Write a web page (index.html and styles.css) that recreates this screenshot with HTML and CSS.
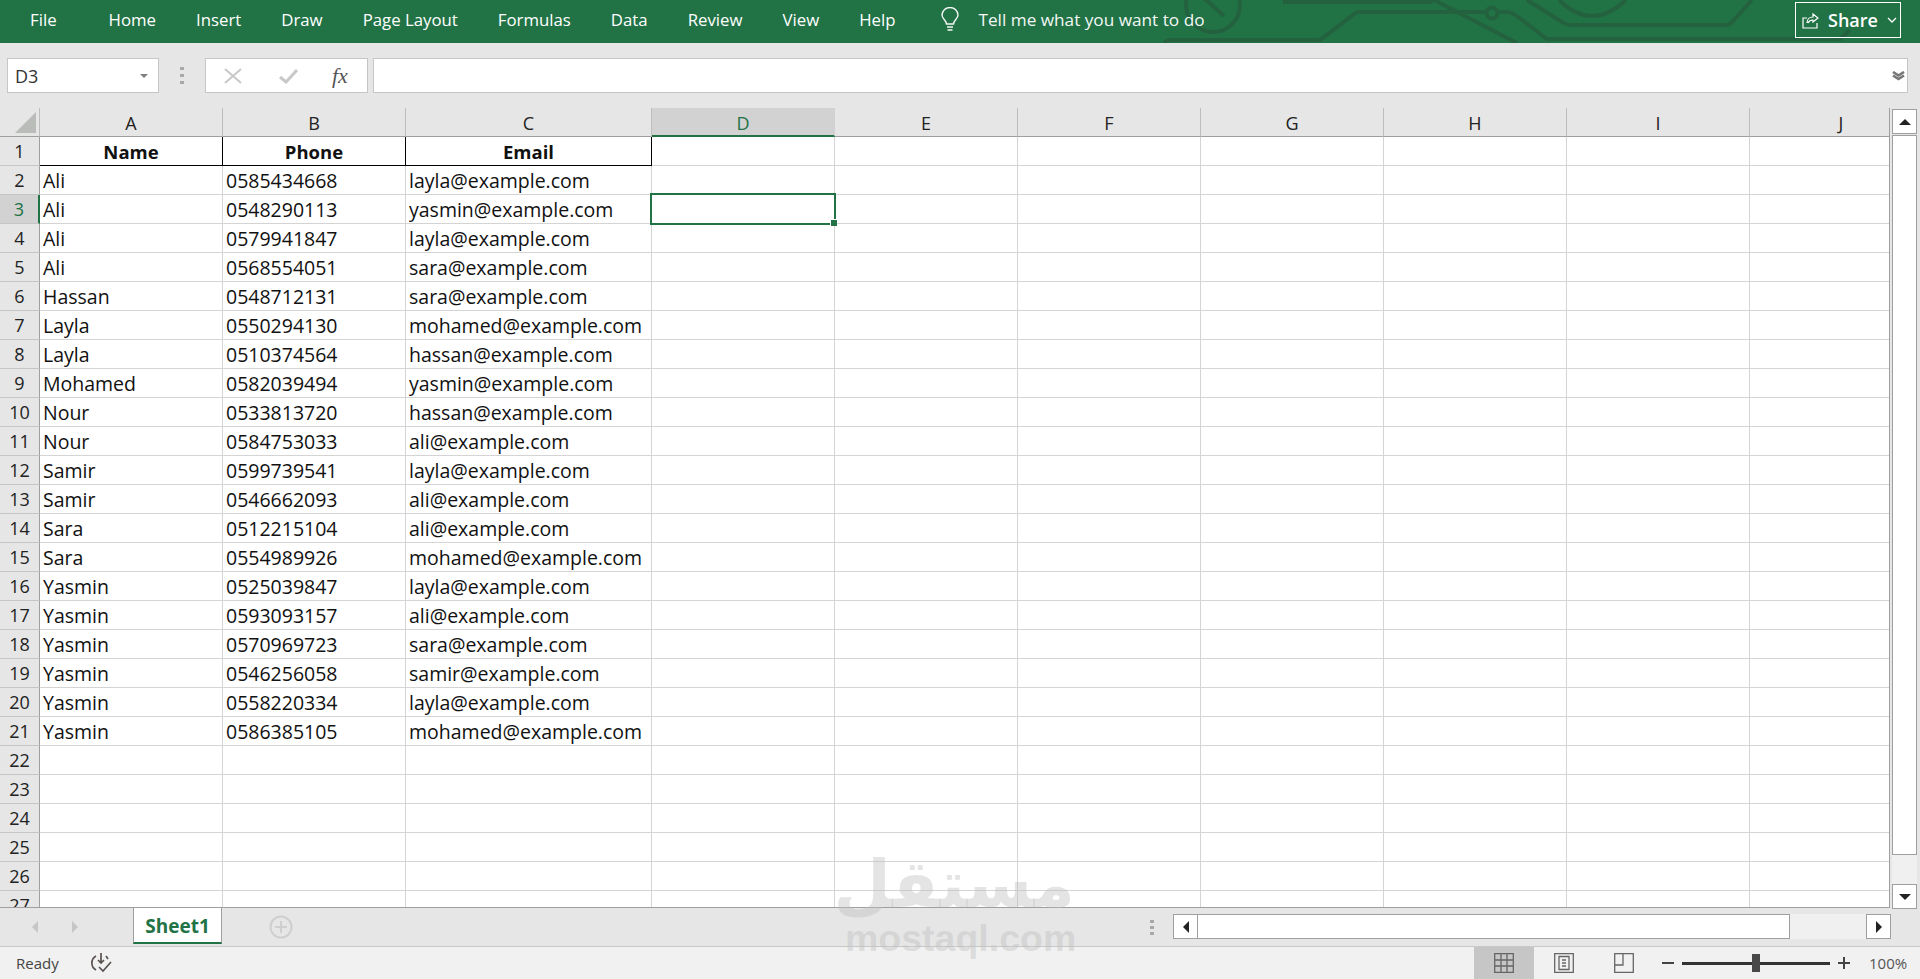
FILE: index.html
```html
<!DOCTYPE html>
<html lang="en">
<head>
    <meta charset="UTF-8">
    <title>Sheet1 - Excel</title>
    <link rel="stylesheet" href="styles.css">
</head>
<body>
<div class="app">
    <header class="ribbon">
        <svg class="circuit" width="800" height="43" viewBox="1120 0 800 43" fill="none">
            <circle cx="1213" cy="5" r="27"/>
            <path d="M1204 -2 L1224 16"/>
            <path d="M1165 43 Q1165 40 1172 40 L1320 40 L1357 12 L1487 12"/>
            <circle cx="1492" cy="13" r="5.5"/>
            <path d="M1498 12 L1506 12 Q1512 12 1518 17 L1547 39 L1800 39"/>
            <path d="M1283 2 L1430 2 L1434 0 L1517 43"/>
            <path d="M1527 0 L1562 22 Q1566 25 1570 25 L1726 25 Q1730 25 1733 21 L1752 0"/>
            <path d="M1559 0 Q1592 32 1626 0"/>
            <path d="M1800 39 L1840 39 L1850 30"/>
        </svg>
        <nav class="tabs">
            <span class="tab tab-file">File</span>
            <span class="tab">Home</span>
            <span class="tab">Insert</span>
            <span class="tab">Draw</span>
            <span class="tab">Page Layout</span>
            <span class="tab">Formulas</span>
            <span class="tab">Data</span>
            <span class="tab">Review</span>
            <span class="tab">View</span>
            <span class="tab">Help</span>
        </nav>
        <div class="tell-me">
            <svg width="18" height="25" viewBox="0 0 18 25" fill="none" stroke="#fff" stroke-width="1.4">
                <path d="M5.5 17 C5.5 13.5 1 12 1 8 A8 7.5 0 0 1 17 8 C17 12 12.5 13.5 12.5 17 Z"/>
                <path d="M6 20 H12 M6.5 23 H11.5"/>
            </svg>
            <span>Tell me what you want to do</span>
        </div>
        <button class="share">
            <svg width="17" height="18" viewBox="0 0 17 18" fill="none" stroke="#fff" stroke-width="1.2">
                <path d="M5 7 H1 V17 H15 V12"/>
                <path d="M5 12 C5 8 8 6 11 6 V3 L16 7 L11 11 V9 C9 9 7 10 6 12"/>
            </svg>
            <span>Share</span>
            <svg width="10" height="6" viewBox="0 0 10 6" fill="none" stroke="#fff" stroke-width="1.3"><path d="M1 1 L5 5 L9 1"/></svg>
        </button>
    </header>

    <section class="formula-bar">
        <div class="name-box">
            <span>D3</span>
            <i class="tri-down"></i>
        </div>
        <div class="grip"><i></i><i></i><i></i></div>
        <div class="fx-box">
            <svg width="18" height="16" viewBox="0 0 18 16" fill="none" stroke="#c8c8c8" stroke-width="2"><path d="M1 1 L17 15 M17 1 L1 15"/></svg>
            <svg width="19" height="16" viewBox="0 0 19 16" fill="none" stroke="#c8c8c8" stroke-width="3"><path d="M1 9 L7 14 L18 2"/></svg>
            <span class="fx">fx</span>
        </div>
        <div class="formula-input">
            <svg width="13" height="10" viewBox="0 0 13 10" fill="none" stroke="#777" stroke-width="2.6"><path d="M1 1 L6.5 4.5 L12 1 M1 4.5 L6.5 8 L12 4.5"/></svg>
        </div>
    </section>

    <section class="sheet">
        <div class="grid-wrap">
            <table class="grid">
                <colgroup>
                    <col class="col-head"><col class="col-std"><col class="col-std"><col class="col-wide">
                    <col class="col-std"><col class="col-std"><col class="col-std"><col class="col-std"><col class="col-std"><col class="col-std"><col class="col-std">
                </colgroup>
                <thead>
                    <tr><th class="corner"><i></i></th><th>A</th><th>B</th><th>C</th><th class="sel-col">D</th><th>E</th><th>F</th><th>G</th><th>H</th><th>I</th><th>J</th></tr>
                </thead>
                <tbody>
                    <tr class="title"><th>1</th><td>Name</td><td>Phone</td><td>Email</td><td></td><td></td><td></td><td></td><td></td><td></td><td></td></tr>
                    <tr><th>2</th><td>Ali</td><td>0585434668</td><td>layla@example.com</td><td></td><td></td><td></td><td></td><td></td><td></td><td></td></tr>
                    <tr><th class="sel-row">3</th><td>Ali</td><td>0548290113</td><td>yasmin@example.com</td><td></td><td></td><td></td><td></td><td></td><td></td><td></td></tr>
                    <tr><th>4</th><td>Ali</td><td>0579941847</td><td>layla@example.com</td><td></td><td></td><td></td><td></td><td></td><td></td><td></td></tr>
                    <tr><th>5</th><td>Ali</td><td>0568554051</td><td>sara@example.com</td><td></td><td></td><td></td><td></td><td></td><td></td><td></td></tr>
                    <tr><th>6</th><td>Hassan</td><td>0548712131</td><td>sara@example.com</td><td></td><td></td><td></td><td></td><td></td><td></td><td></td></tr>
                    <tr><th>7</th><td>Layla</td><td>0550294130</td><td>mohamed@example.com</td><td></td><td></td><td></td><td></td><td></td><td></td><td></td></tr>
                    <tr><th>8</th><td>Layla</td><td>0510374564</td><td>hassan@example.com</td><td></td><td></td><td></td><td></td><td></td><td></td><td></td></tr>
                    <tr><th>9</th><td>Mohamed</td><td>0582039494</td><td>yasmin@example.com</td><td></td><td></td><td></td><td></td><td></td><td></td><td></td></tr>
                    <tr><th>10</th><td>Nour</td><td>0533813720</td><td>hassan@example.com</td><td></td><td></td><td></td><td></td><td></td><td></td><td></td></tr>
                    <tr><th>11</th><td>Nour</td><td>0584753033</td><td>ali@example.com</td><td></td><td></td><td></td><td></td><td></td><td></td><td></td></tr>
                    <tr><th>12</th><td>Samir</td><td>0599739541</td><td>layla@example.com</td><td></td><td></td><td></td><td></td><td></td><td></td><td></td></tr>
                    <tr><th>13</th><td>Samir</td><td>0546662093</td><td>ali@example.com</td><td></td><td></td><td></td><td></td><td></td><td></td><td></td></tr>
                    <tr><th>14</th><td>Sara</td><td>0512215104</td><td>ali@example.com</td><td></td><td></td><td></td><td></td><td></td><td></td><td></td></tr>
                    <tr><th>15</th><td>Sara</td><td>0554989926</td><td>mohamed@example.com</td><td></td><td></td><td></td><td></td><td></td><td></td><td></td></tr>
                    <tr><th>16</th><td>Yasmin</td><td>0525039847</td><td>layla@example.com</td><td></td><td></td><td></td><td></td><td></td><td></td><td></td></tr>
                    <tr><th>17</th><td>Yasmin</td><td>0593093157</td><td>ali@example.com</td><td></td><td></td><td></td><td></td><td></td><td></td><td></td></tr>
                    <tr><th>18</th><td>Yasmin</td><td>0570969723</td><td>sara@example.com</td><td></td><td></td><td></td><td></td><td></td><td></td><td></td></tr>
                    <tr><th>19</th><td>Yasmin</td><td>0546256058</td><td>samir@example.com</td><td></td><td></td><td></td><td></td><td></td><td></td><td></td></tr>
                    <tr><th>20</th><td>Yasmin</td><td>0558220334</td><td>layla@example.com</td><td></td><td></td><td></td><td></td><td></td><td></td><td></td></tr>
                    <tr><th>21</th><td>Yasmin</td><td>0586385105</td><td>mohamed@example.com</td><td></td><td></td><td></td><td></td><td></td><td></td><td></td></tr>
                    <tr><th>22</th><td></td><td></td><td></td><td></td><td></td><td></td><td></td><td></td><td></td><td></td></tr>
                    <tr><th>23</th><td></td><td></td><td></td><td></td><td></td><td></td><td></td><td></td><td></td><td></td></tr>
                    <tr><th>24</th><td></td><td></td><td></td><td></td><td></td><td></td><td></td><td></td><td></td><td></td></tr>
                    <tr><th>25</th><td></td><td></td><td></td><td></td><td></td><td></td><td></td><td></td><td></td><td></td></tr>
                    <tr><th>26</th><td></td><td></td><td></td><td></td><td></td><td></td><td></td><td></td><td></td><td></td></tr>
                    <tr><th>27</th><td></td><td></td><td></td><td></td><td></td><td></td><td></td><td></td><td></td><td></td></tr>
                </tbody>
            </table>
            <div class="selection"><i></i></div>
        </div>
        <div class="vscroll">
            <div class="sb-btn"><i class="arrow-up"></i></div>
            <div class="vthumb"></div>
            <div class="vtrack"></div>
            <div class="sb-btn"><i class="arrow-down"></i></div>
        </div>
    </section>

    <section class="tabbar">
        <div class="tab-nav"><i class="arrow-left dim"></i><i class="arrow-right dim"></i></div>
        <div class="sheet-tab">Sheet1</div>
        <svg class="add-sheet" width="24" height="24" viewBox="0 0 24 24" fill="none" stroke="#cfcfcf" stroke-width="2">
            <circle cx="12" cy="12" r="10.5"/>
            <path d="M12 6 V18 M6 12 H18"/>
        </svg>
        <div class="hsplit"><i></i><i></i><i></i></div>
        <div class="hscroll">
            <div class="sb-btn"><i class="arrow-left"></i></div>
            <div class="hthumb"></div>
            <div class="htrack"></div>
            <div class="sb-btn"><i class="arrow-right"></i></div>
        </div>
    </section>

    <footer class="status">
        <span class="ready">Ready</span>
        <svg class="macro" width="22" height="20" viewBox="0 0 22 20" fill="none" stroke="#5a5250" stroke-width="1.7">
            <path d="M6 3 A8 8 0 0 0 6 17"/>
            <path d="M11 0 V10 M8 7 L11 10 L14 7"/>
            <path d="M9 14 L13 18 L21 9"/>
            <path d="M16 3 L18 6"/>
        </svg>
        <div class="status-right">
            <div class="view-btn active">
                <svg width="20" height="20" viewBox="0 0 20 20" fill="none" stroke="#666" stroke-width="1.3"><path d="M.7.7 H19.3 V19.3 H.7 Z M7 .7 V19.3 M13 .7 V19.3 M.7 7 H19.3 M.7 13 H19.3"/></svg>
            </div>
            <div class="view-btn">
                <svg width="20" height="20" viewBox="0 0 20 20" fill="none" stroke="#666" stroke-width="1.3"><path d="M.7.7 H19.3 V19.3 H.7 Z M5 3.5 H15 V16.5 H5 Z M8 7 H12 M8 10 H12 M8 13 H12"/></svg>
            </div>
            <div class="view-btn">
                <svg width="20" height="20" viewBox="0 0 20 20" fill="none" stroke="#666" stroke-width="1.3"><path d="M.7.7 H19.3 V19.3 H.7 Z M9 .7 V12 H.7"/></svg>
            </div>
            <div class="zoom">
                <i class="zoom-minus"></i>
                <div class="zoom-track"><i></i></div>
                <i class="zoom-plus"></i>
            </div>
            <span class="zoom-val">100%</span>
        </div>
    </footer>

    <div class="watermark">
        <div class="wm-ar" dir="rtl" lang="ar">مستقل</div>
        <div class="wm-en">mostaql.com</div>
    </div>
</div>
</body>
</html>
```

FILE: styles.css
```css
* {
    box-sizing: border-box;
}
body {
    margin: 0;
    font-family: "Open Sans", "Noto Sans", sans-serif;
    background-color: #e6e6e6;
    color: #111;
}
.app {
    position: relative;
    width: 1920px;
    height: 979px;
    overflow: hidden;
    display: flex;
    flex-direction: column;
}

/* ribbon */
.ribbon {
    position: relative;
    height: 43px;
    flex: none;
    display: flex;
    align-items: center;
    background-color: #217346;
    color: #fff;
    overflow: hidden;
}
.circuit {
    position: absolute;
    left: 1120px;
    top: 0;
}
.circuit circle,
.circuit path {
    stroke: #24623f;
    stroke-width: 4;
}
.tabs {
    position: relative;
    display: flex;
    gap: 40px;
    padding-left: 30px;
    margin-top: -4px;
    font-size: 16.8px;
}
.tab-file {
    margin-right: 12px;
}
.tell-me {
    position: relative;
    display: flex;
    align-items: center;
    gap: 19px;
    margin-left: 46px;
    margin-top: -4px;
    font-size: 17.2px;
    opacity: .95;
}
.share {
    position: relative;
    margin-left: auto;
    margin-right: 19px;
    width: 106px;
    height: 36px;
    margin-top: -3px;
    display: flex;
    align-items: center;
    padding: 0 0 0 6px;
    gap: 9px;
    background: none;
    border: 1px solid #fff;
    color: #fff;
    font: 600 18px "Open Sans", sans-serif;
}

/* formula bar */
.formula-bar {
    height: 65px;
    flex: none;
    display: flex;
    padding: 15px 12px 15px 7px;
}
.name-box {
    width: 152px;
    display: flex;
    align-items: center;
    justify-content: space-between;
    padding: 0 10px 0 7px;
    background-color: #fff;
    border: 1px solid #c6c6c6;
    font-size: 18px;
    color: #333;
}
.tri-down {
    border: 4px solid transparent;
    border-top: 4px solid #808080;
    border-bottom: 0;
}
.grip {
    width: 46px;
    display: flex;
    flex-direction: column;
    align-items: center;
    justify-content: center;
    gap: 4px;
}
.grip i {
    width: 4px;
    height: 3px;
    background-color: #a8a8a8;
}
.fx-box {
    width: 163px;
    display: flex;
    align-items: center;
    gap: 37px;
    padding-left: 18px;
    background-color: #fff;
    border: 1px solid #c6c6c6;
}
.fx {
    margin-left: -3px;
    font: italic 22px "Liberation Serif", serif;
    color: #555;
}
.formula-input {
    flex: 1;
    margin-left: 5px;
    display: flex;
    align-items: center;
    justify-content: flex-end;
    padding-right: 2px;
    background-color: #fff;
    border: 1px solid #c6c6c6;
}

/* grid */
.sheet {
    height: 800px;
    flex: none;
    display: flex;
}
.grid-wrap {
    position: relative;
    width: 1890px;
    height: 800px;
    overflow: hidden;
    border-right: 1px solid #9f9f9f;
    border-bottom: 1px solid #9f9f9f;
}
.grid {
    table-layout: fixed;
    width: 1933px;
    border-collapse: separate;
    border-spacing: 0;
    font-size: 19.5px;
}
.col-head { width: 40px; }
.col-std { width: 183px; }
.col-wide { width: 246px; }
.grid tr {
    height: 29px;
}
.grid th {
    padding: 0;
    font-size: 18px;
    font-weight: 400;
    color: #222;
    background-color: #e6e6e6;
}
.grid thead th {
    padding-top: 2px;
    border-right: 1px solid #bdbdbd;
    border-bottom: 1px solid #9f9f9f;
}
.grid tbody th {
    border-right: 1px solid #9f9f9f;
    border-bottom: 1px solid #c6c6c6;
    text-align: center;
}
.grid td {
    padding: 0 0 0 3px;
    background-color: #fff;
    border-right: 1px solid #d4d4d4;
    border-bottom: 1px solid #d4d4d4;
    white-space: nowrap;
    overflow: hidden;
    color: #111;
}
.corner {
    position: relative;
}
.corner i {
    position: absolute;
    right: 3px;
    bottom: 3px;
    width: 0;
    height: 0;
    border-style: solid;
    border-width: 0 0 21px 21px;
    border-color: transparent transparent #b9bcb8 transparent;
}
.grid thead .sel-col {
    color: #217346;
    background-color: #d2d2d2;
    border-bottom: 2px solid #217346;
    border-right-color: #d2d2d2;
}
.grid tbody .sel-row {
    color: #217346;
    background-color: #d2d2d2;
    border-right: 2px solid #217346;
}
.title td {
    text-align: center;
    font-size: 18.5px;
    font-weight: 700;
    padding-left: 0;
}
.title td:nth-child(2),
.title td:nth-child(3),
.title td:nth-child(4) {
    border-right-color: #000;
    border-bottom-color: #000;
}
.selection {
    position: absolute;
    left: 650px;
    top: 85px;
    width: 186px;
    height: 32px;
    border: 2px solid #217346;
}
.selection i {
    position: absolute;
    right: -3px;
    bottom: -3px;
    width: 7px;
    height: 7px;
    background-color: #217346;
    border: 1px solid #fff;
    border-right: 0;
    border-bottom: 0;
}

/* scrollbars */
.vscroll {
    width: 25px;
    margin-left: 2px;
    margin-top: 1px;
    height: 800px;
    display: flex;
    flex-direction: column;
}
.sb-btn {
    flex: none;
    display: flex;
    align-items: center;
    justify-content: center;
    background-color: #fff;
    border: 1px solid #9f9f9f;
}
.vscroll .sb-btn {
    height: 25px;
}
.vthumb {
    flex: none;
    height: 720px;
    margin-top: 1px;
    background-color: #fff;
    border: 1px solid #9f9f9f;
}
.vtrack {
    flex: 1;
    background-color: #f0f0f0;
}
.arrow-up,
.arrow-down,
.arrow-left,
.arrow-right {
    width: 0;
    height: 0;
    border-style: solid;
}
.arrow-up {
    border-width: 0 6px 6px 6px;
    border-color: transparent transparent #222 transparent;
}
.arrow-down {
    border-width: 6px 6px 0 6px;
    border-color: #222 transparent transparent transparent;
}
.arrow-left {
    border-width: 6px 6px 6px 0;
    border-color: transparent #222 transparent transparent;
}
.arrow-right {
    border-width: 6px 0 6px 6px;
    border-color: transparent transparent transparent #222;
}
.arrow-left.dim {
    border-right-color: #c6c6c6;
}
.arrow-right.dim {
    border-left-color: #c6c6c6;
}

/* sheet tabs */
.tabbar {
    position: relative;
    height: 39px;
    flex: none;
    display: flex;
    align-items: center;
    border-bottom: 1px solid #c8c8c8;
}
.tab-nav {
    width: 133px;
    display: flex;
    gap: 34px;
    padding-left: 32px;
}
.sheet-tab {
    align-self: flex-start;
    width: 89px;
    height: 36px;
    padding-top: 1px;
    display: flex;
    align-items: center;
    justify-content: center;
    background-color: #fff;
    border-left: 1px solid #9f9f9f;
    border-right: 1px solid #9f9f9f;
    border-bottom: 2px solid #217346;
    font-size: 19px;
    font-weight: 700;
    color: #217346;
}
.add-sheet {
    margin-left: 47px;
}
.hsplit {
    position: absolute;
    left: 1150px;
    top: 12px;
    display: flex;
    flex-direction: column;
    gap: 3px;
}
.hsplit i {
    width: 4px;
    height: 3px;
    background-color: #a8a8a8;
}
.hscroll {
    position: absolute;
    left: 1173px;
    top: 6px;
    width: 718px;
    height: 25px;
    display: flex;
}
.hscroll .sb-btn {
    width: 25px;
}
.hthumb {
    width: 592px;
    background-color: #fff;
    border: 1px solid #9f9f9f;
    border-left: 0;
}
.htrack {
    flex: 1;
    background-color: #f0f0f0;
}

/* status bar */
.status {
    flex: 1;
    display: flex;
    align-items: center;
    padding-left: 16px;
    background-color: #f1f1f1;
    font-size: 15px;
    color: #444;
}
.macro {
    margin-left: 31px;
}
.status-right {
    margin-left: auto;
    align-self: stretch;
    display: flex;
    align-items: center;
}
.view-btn {
    width: 60px;
    height: 100%;
    display: flex;
    align-items: center;
    justify-content: center;
}
.view-btn.active {
    background-color: #c6c6c6;
}
.zoom {
    display: flex;
    align-items: center;
    margin-left: 8px;
}
.zoom-minus {
    width: 12px;
    height: 2px;
    background-color: #444;
}
.zoom-track {
    position: relative;
    width: 148px;
    height: 3px;
    margin: 0 8px;
    background-color: #333;
}
.zoom-track i {
    position: absolute;
    left: 70px;
    top: -8px;
    width: 8px;
    height: 18px;
    background-color: #484848;
}
.zoom-plus {
    position: relative;
    width: 12px;
    height: 2px;
    background-color: #444;
}
.zoom-plus::after {
    content: "";
    position: absolute;
    left: 5px;
    top: -5px;
    width: 2px;
    height: 12px;
    background-color: #444;
}
.zoom-val {
    width: 70px;
    padding-left: 19px;
    font-size: 15px;
    color: #555;
}

/* watermark */
.watermark {
    position: absolute;
    left: 845px;
    top: 851px;
    width: 230px;
    text-align: center;
    color: rgba(190, 190, 190, .42);
    pointer-events: none;
}
.wm-ar {
    padding-left: 12px;
    font: 700 66px/68px "DejaVu Sans", sans-serif;
}
.wm-en {
    font: 700 37.5px/38px "Liberation Sans", sans-serif;
}
```
